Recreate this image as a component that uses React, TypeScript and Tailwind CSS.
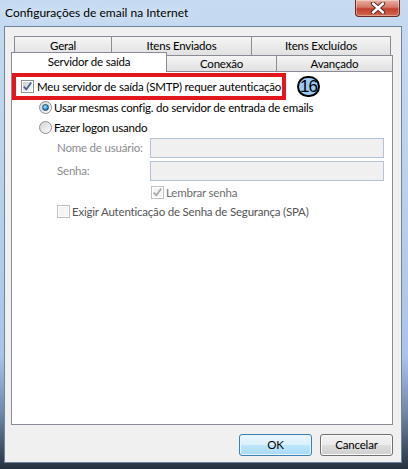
import React from 'react'

function CheckBox({ checked, disabled }: { checked?: boolean; disabled?: boolean }) {
  return (
    <span
      className={
        disabled
          ? 'w-[13px] h-[13px] shrink-0 border border-[#c0c0c0] bg-white flex items-center justify-center'
          : 'w-[13px] h-[13px] shrink-0 border border-[#8e8f8f] bg-white flex items-center justify-center'
      }
    >
      <span
        className={
          disabled
            ? 'w-[9px] h-[9px] bg-[#f4f4f4] flex items-center justify-center'
            : 'w-[9px] h-[9px] bg-gradient-to-br from-[#cdd0d4] to-[#f7f7f7] flex items-center justify-center'
        }
      >
        {checked && (
          <svg width="11" height="11" viewBox="0 0 11 11" className="shrink-0">
            <path
              d="M1.8 5.6 L4.3 8.3 L9.2 1.6"
              fill="none"
              stroke={disabled ? '#a8a8a8' : '#4a5f8f'}
              strokeWidth="1.7"
            />
          </svg>
        )}
      </span>
    </span>
  )
}

function Radio({ checked }: { checked?: boolean }) {
  return (
    <span className="w-[13px] h-[13px] shrink-0 rounded-full border border-[#8e8f8f] bg-gradient-to-br from-[#d2d4d7] to-[#fbfbfb] flex items-center justify-center">
      {checked && (
        <span className="w-[7px] h-[7px] rounded-full border border-[#1a4f73] bg-[radial-gradient(circle_at_40%_35%,#b5ecff,#2c93cf_55%,#0e4a75)]" />
      )}
    </span>
  )
}

function Button({ label, primary }: { label: string; primary?: boolean }) {
  return (
    <button
      className={
        primary
          ? 'w-[73px] h-[22px] rounded-[3px] border border-[#3c7fb1] bg-[linear-gradient(#eaf6fd,#d9f0fc_50%,#bee6fd_50%,#a7d9f5)] shadow-[inset_0_0_0_1px_#e6f5fd] text-black'
          : 'w-[73px] h-[22px] rounded-[3px] border border-[#707070] bg-[linear-gradient(#f2f2f2,#ebebeb_50%,#dddddd_50%,#cfcfcf)] shadow-[inset_0_0_0_1px_#fbfbfb] text-black'
      }
    >
      {label}
    </button>
  )
}

export default function App() {
  return (
    <div className="w-[408px] h-[469px] overflow-hidden flex flex-col [font-family:Lato,'Liberation_Sans',sans-serif] bg-[linear-gradient(#c6dbf1,#b9d1ec_40%,#a9c5e6_76%,#6f89a8_88%,#27313f)]">
      {/* title bar */}
      <div className="h-[26px] shrink-0 flex items-start">
        <span className="pl-[5px] pt-[4px] text-[12px] text-black [text-shadow:0_0_8px_rgba(255,255,255,0.9)]">
          Configurações de email na Internet
        </span>

        <div className="ml-auto mr-[8px] w-[45px] h-[17px] rounded-b-[4px] border border-t-0 border-[#6b2a22] bg-[linear-gradient(#eab0a2,#d67766_45%,#c2402f_55%,#d26a50)] flex items-center justify-center shadow-[inset_0_0_0_1px_rgba(255,255,255,0.35)]">
          <svg width="16" height="12" viewBox="0 0 16 12">
            <path d="M3 1.5 L13 10.5 M13 1.5 L3 10.5" stroke="#5a2a25" strokeWidth="4.4" strokeLinecap="round" />
            <path d="M3 1.5 L13 10.5 M13 1.5 L3 10.5" stroke="#ffffff" strokeWidth="2.4" strokeLinecap="round" />
          </svg>
        </div>
      </div>

      {/* client area */}
      <div className="ml-[4px] w-[398px] h-[437px] shrink-0 border border-[#71839a] bg-[#f0f0f0] flex flex-col pt-[9px] pl-[6px] text-[11.5px] tracking-[-0.2px] text-black">
        {/* tab rows */}
        <div className="flex h-[19px] ml-[3px]">
          <div className="w-[98px] border border-b-0 border-[#898c95] bg-gradient-to-b from-[#f5f5f5] to-[#e1e1e1] flex items-center justify-center">
            Geral
          </div>
          <div className="w-[140px] border border-l-0 border-b-0 border-[#898c95] bg-gradient-to-b from-[#f5f5f5] to-[#e1e1e1] flex items-center justify-center">
            Itens Enviados
          </div>
          <div className="w-[139px] border border-l-0 border-b-0 border-[#898c95] bg-gradient-to-b from-[#f5f5f5] to-[#e1e1e1] flex items-center justify-center">
            Itens Excluídos
          </div>
        </div>

        <div className="flex items-end h-[19px] -mt-[3px]">
          <div className="relative z-10 w-[156px] h-[20px] -mb-px border border-b-0 border-[#898c95] bg-white flex items-center justify-center pb-[1px]">
            Servidor de saída
          </div>
          <div className="w-[110px] h-[16px] border border-l-0 border-b-0 border-[#898c95] bg-gradient-to-b from-[#f5f5f5] to-[#e1e1e1] flex items-center justify-center pt-[1px]">
            Conexão
          </div>
          <div className="w-[116px] h-[16px] border border-l-0 border-b-0 border-[#898c95] bg-gradient-to-b from-[#f5f5f5] to-[#e1e1e1] flex items-center justify-center pt-[1px]">
            Avançado
          </div>
        </div>

        {/* tab page */}
        <div className="w-[382px] h-[354px] border border-[#898c95] bg-white flex flex-col">
          <div className="flex items-center mt-[1px]">
            <div className="w-[274px] h-[27px] border-[4px] border-[#e3161e] flex items-center gap-[3px] pl-[5px]">
              <CheckBox checked />
              <span className="whitespace-nowrap">Meu servidor de saída (SMTP) requer autenticação</span>
            </div>

            <div className="ml-[11px] w-[23px] h-[21px] rounded-full border-2 border-black bg-[#9ccaf4] flex items-center justify-center text-[17px] leading-none tracking-[-1px] [font-family:'Liberation_Sans',sans-serif]">
              16
            </div>
          </div>

          <div className="flex items-center gap-[2px] ml-[27px] mt-[1px] h-[13px]">
            <Radio checked />
            <span className="whitespace-nowrap">Usar mesmas config. do servidor de entrada de emails</span>
          </div>

          <div className="flex items-center gap-[2px] ml-[27px] mt-[7px] h-[13px]">
            <Radio />
            <span>Fazer logon usando</span>
          </div>

          <div className="flex items-center ml-[45px] mt-[4px]">
            <span className="w-[93px] text-[#8b8b8b]">Nome de usuário:</span>
            <div className="w-[234px] h-[20px] border border-[#b4c3d6] bg-[#f0f0f0]" />
          </div>

          <div className="flex items-center ml-[45px] mt-[3px]">
            <span className="w-[93px] text-[#8b8b8b]">Senha:</span>
            <div className="w-[234px] h-[20px] border border-[#b4c3d6] bg-[#f0f0f0]" />
          </div>

          <div className="flex items-center gap-[2px] ml-[139px] mt-[5px] h-[13px]">
            <CheckBox checked disabled />
            <span className="text-[#6d6d6d]">Lembrar senha</span>
          </div>

          <div className="flex items-center gap-[2px] ml-[45px] mt-[6px] h-[13px]">
            <CheckBox disabled />
            <span className="text-[#555555] whitespace-nowrap">Exigir Autenticação de Senha de Segurança (SPA)</span>
          </div>
        </div>

        {/* buttons */}
        <div className="flex justify-end gap-[8px] mt-[9px] pr-[8px]">
          <Button label="OK" primary />
          <Button label="Cancelar" />
        </div>
      </div>
    </div>
  )
}
